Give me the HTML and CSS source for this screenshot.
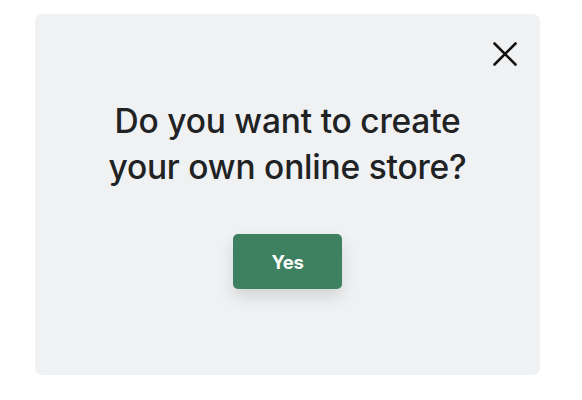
FILE: index.html
```html
<!DOCTYPE html>
<html>
<head>
<meta charset="utf-8">
<link rel="stylesheet" href="styles.css">
</head>
<body>
<div class="card">
  <div class="top">
    <button class="close" aria-label="Close">
      <svg width="24" height="24" viewBox="0 0 24 24"><path d="M1.5 1.5 L22.5 22.5 M22.5 1.5 L1.5 22.5" stroke="#111" stroke-width="2.6" stroke-linecap="round" fill="none"/></svg>
    </button>
  </div>
  <h1 class="title">Do you want to create<br>your own online store?</h1>
  <div class="actions">
    <button class="yes">Yes</button>
  </div>
</div>
</body>
</html>
```
FILE: styles.css
```css
html, body { margin: 0; padding: 0; background: #ffffff; }
body { width: 582px; height: 400px; font-family: Inter, "Liberation Sans", sans-serif; }
.card {
  margin: 14px 0 0 35px;
  width: 505px;
  height: 361px;
  background: #f0f1f3;
  border-radius: 7px;
  box-sizing: border-box;
  display: flex;
  flex-direction: column;
  align-items: center;
}
.top { align-self: stretch; display: flex; justify-content: flex-end; padding: 28px 23px 0 0; height: 24px; }
.close { background: none; border: 0; padding: 0; width: 24px; height: 24px; display: block; cursor: pointer; }
.close svg { display: block; }
.title {
  margin: 32px 0 0 0;
  font-size: 33.5px;
  line-height: 46px;
  font-weight: 500;
  color: #202223;
  text-align: center;
  letter-spacing: -0.2px;
}
.actions { margin-top: 44px; }
.yes {
  width: 109px;
  height: 55px;
  background: #3d8160;
  color: #fff;
  border: 0;
  border-radius: 5px;
  font-family: Inter, "Liberation Sans", sans-serif;
  font-weight: 700;
  font-size: 18.5px;
  letter-spacing: -0.3px;
  box-shadow: 0 8px 16px rgba(0,0,0,0.12);
}
```
